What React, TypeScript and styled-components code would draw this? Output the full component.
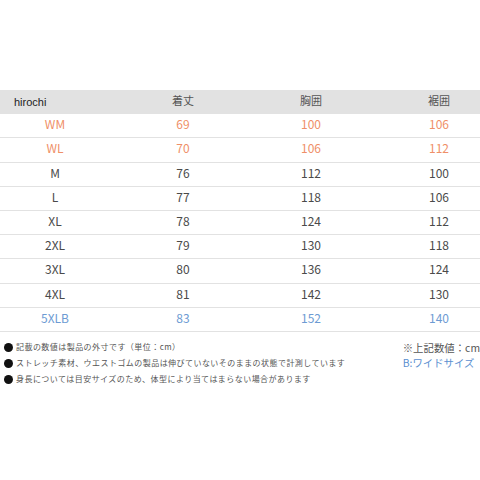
import React from "react";
import styled, { createGlobalStyle } from "styled-components";

const Global = createGlobalStyle`
  html, body { margin: 0; padding: 0; background: #fff; overflow: hidden; }
  body { font-family: "Noto Sans CJK JP", "Noto Sans", sans-serif; }
`;

const Page = styled.div`
  width: 480px;
  height: 480px;
  overflow: hidden;
  padding-top: 90px;
  box-sizing: border-box;
`;

const Table = styled.div`
  position: relative;
  width: 512px;
  margin-left: -9px;
`;

const Row = styled.div<{ $head?: boolean }>`
  display: grid;
  grid-template-columns: repeat(4, 128px);
  align-items: center;
  height: 24.2px;
  box-sizing: border-box;
  padding-bottom: 3px;
  background: ${(p) => (p.$head ? "#e2e2e2" : "#fff")};
  border-bottom: ${(p) => (p.$head ? "none" : "1.5px solid #e2e2e2")};
`;

const Cell = styled.div<{ $tone?: "orange" | "blue" | "dark" | "head" }>`
  text-align: center;
  font-size: ${(p) => (p.$tone === "head" ? "11px" : "12px")};
  color: ${(p) =>
    p.$tone === "orange"
      ? "#ef8f68"
      : p.$tone === "blue"
      ? "#6d9bd3"
      : p.$tone === "head"
      ? "#555"
      : "#4a4a4a"};
  line-height: 1;
`;

const Mark = styled.span`
  position: absolute;
  left: 23px;
  top: 6px;
  font-family: "Liberation Sans", Arial, sans-serif;
  font-size: 11px;
  color: #222;
`;

const Notes = styled.div`
  display: flex;
  justify-content: space-between;
  align-items: flex-start;
  padding: 9px 0 0 4px;
`;

const NoteList = styled.ul`
  list-style: none;
  margin: 0;
  padding: 0;
  display: flex;
  flex-direction: column;
  gap: 5px;
`;

const Note = styled.li`
  display: flex;
  align-items: center;
  gap: 3px;
  font-size: 8px;
  letter-spacing: 0.45px;
  color: #555;
  height: 11px;
  &::before {
    content: "";
    width: 9px;
    height: 9px;
    border-radius: 50%;
    background: #111;
    flex: none;
    margin-top: 3px;
  }
`;

const Side = styled.div`
  display: flex;
  flex-direction: column;
  align-items: flex-start;
  margin-top: -1px;
  font-size: 10.4px;
  line-height: 15px;
  color: #555;
  white-space: nowrap;
`;

const Blue = styled.span`
  color: #5b8fd0;
`;

type R = { s: string; v: [string, string, string]; tone: "orange" | "blue" | "dark" };
const rows: R[] = [
  { s: "WM", v: ["69", "100", "106"], tone: "orange" },
  { s: "WL", v: ["70", "106", "112"], tone: "orange" },
  { s: "M", v: ["76", "112", "100"], tone: "dark" },
  { s: "L", v: ["77", "118", "106"], tone: "dark" },
  { s: "XL", v: ["78", "124", "112"], tone: "dark" },
  { s: "2XL", v: ["79", "130", "118"], tone: "dark" },
  { s: "3XL", v: ["80", "136", "124"], tone: "dark" },
  { s: "4XL", v: ["81", "142", "130"], tone: "dark" },
  { s: "5XLB", v: ["83", "152", "140"], tone: "blue" },
];

export default function App() {
  return (
    <Page>
      <Global />
      <Table>
        <Row $head>
          <Cell $tone="head" />
          <Cell $tone="head">着丈</Cell>
          <Cell $tone="head">胸囲</Cell>
          <Cell $tone="head">裾囲</Cell>
        </Row>
        <Mark>hirochi</Mark>
        {rows.map((r) => (
          <Row key={r.s}>
            <Cell $tone={r.tone}>{r.s}</Cell>
            {r.v.map((v, i) => (
              <Cell key={i} $tone={r.tone}>
                {v}
              </Cell>
            ))}
          </Row>
        ))}
      </Table>
      <Notes>
        <NoteList>
          <Note>記載の数値は製品の外寸です（単位：cm）</Note>
          <Note>ストレッチ素材、ウエストゴムの製品は伸びていないそのままの状態で計測しています</Note>
          <Note>身長については目安サイズのため、体型により当てはまらない場合があります</Note>
        </NoteList>
        <Side>
          <span>※上記数値：cm</span>
          <Blue>B:ワイドサイズ</Blue>
        </Side>
      </Notes>
    </Page>
  );
}
